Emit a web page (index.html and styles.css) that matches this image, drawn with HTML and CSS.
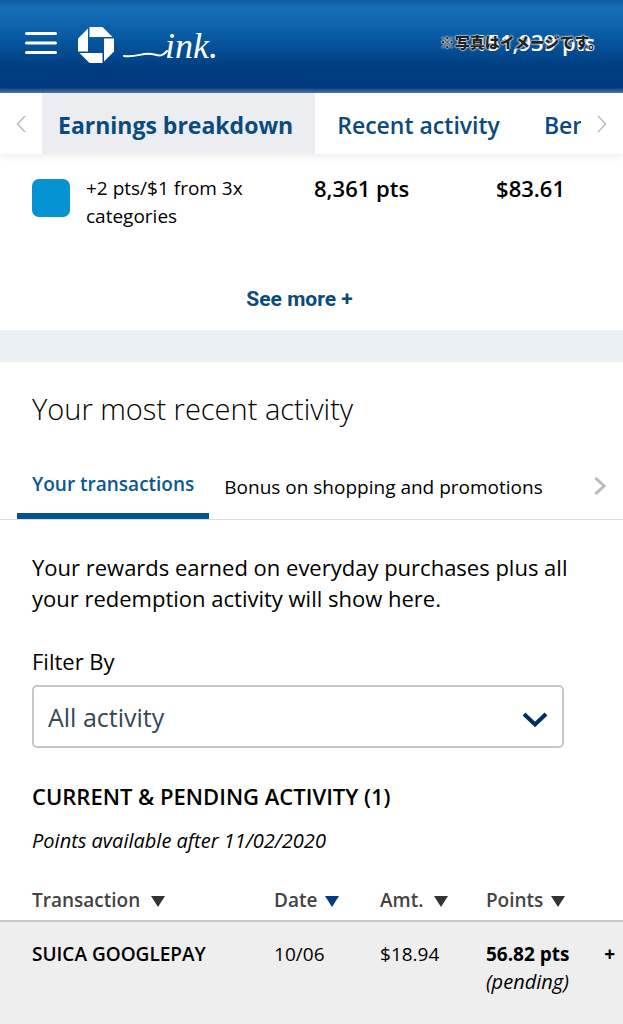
FILE: index.html
```
<!DOCTYPE html>
<html lang="en">
<head>
    <meta charset="UTF-8">
    <meta name="viewport" content="width=device-width, initial-scale=1.0">
    <title>Chase Ink - Rewards activity</title>
    <link rel="stylesheet" href="styles.css">
</head>
<body>
    <header class="header">
        <button class="menu-button" aria-label="Menu">
            <svg width="32" height="24" viewBox="0 0 32 24" stroke="#fff" stroke-width="3" stroke-linecap="round">
                <path d="M1.5 2.5H30.5M1.5 12H30.5M1.5 21.5H30.5"/>
            </svg>
        </button>
        <svg class="logo" width="36" height="36" viewBox="0 0 36 36" fill="#fff">
            <path d="M11.5 0H24.5L34.5 10H11.5Z"/>
            <path d="M36 11.5V24.5L26 34.5V11.5Z"/>
            <path d="M24.5 36H11.5L1.5 26H24.5Z"/>
            <path d="M0 24.5V11.5L10 1.5V24.5Z"/>
        </svg>
        <svg class="brand" width="100" height="42" viewBox="0 0 100 42">
            <path d="M1 34C13 36 20 30 29 32C35 33 38 36 44 29" fill="none" stroke="#fff" stroke-width="2" stroke-linecap="round"/>
            <text x="42" y="36">ink.</text>
        </svg>
        <div class="balance">
            <span class="points">151,939 pts</span>
            <span class="notice" lang="ja">※写真はイメージです。</span>
        </div>
    </header>

    <nav class="tabs">
        <button class="tab-arrow" aria-label="Previous">
            <svg width="10" height="18" viewBox="0 0 10 18" fill="none" stroke="#bbb" stroke-width="1.5"><path d="M9 1L1.5 9L9 17"/></svg>
        </button>
        <div class="tab-list">
            <a href="#" class="tab active">Earnings breakdown</a>
            <a href="#" class="tab">Recent activity</a>
            <a href="#" class="tab">Benefits</a>
        </div>
        <button class="tab-arrow" aria-label="Next">
            <svg width="10" height="18" viewBox="0 0 10 18" fill="none" stroke="#bbb" stroke-width="1.5"><path d="M1 1L8.5 9L1 17"/></svg>
        </button>
    </nav>

    <section class="earnings">
        <div class="earning">
            <span class="swatch"></span>
            <span class="category">+2 pts/$1 from 3x categories</span>
            <span class="earned">8,361 pts</span>
            <span class="earned">$83.61</span>
        </div>
        <button class="see-more">See more +</button>
    </section>

    <main class="activity">
        <h2>Your most recent activity</h2>
        <div class="subtabs">
            <a href="#" class="subtab active">Your transactions</a>
            <a href="#" class="subtab">Bonus on shopping and promotions</a>
            <button class="subtab-arrow" aria-label="Next">
                <svg width="12" height="18" viewBox="0 0 12 18" fill="none" stroke="#bbb" stroke-width="3"><path d="M1.5 1L10 9L1.5 17"/></svg>
            </button>
        </div>
        <p class="intro">Your rewards earned on everyday purchases plus all your redemption activity will show here.</p>
        <div class="filter">
            <label for="filter">Filter By</label>
            <div class="select-wrapper">
                <select id="filter">
                    <option>All activity</option>
                </select>
                <svg class="chevron" width="26" height="16" viewBox="0 0 26 16" fill="none" stroke="#002f5f" stroke-width="4"><path d="M2 2L13 12.5L24 2"/></svg>
            </div>
        </div>
        <h3>CURRENT &amp; PENDING ACTIVITY (1)</h3>
        <p class="available">Points available after 11/02/2020</p>
        <table class="transactions">
            <colgroup>
                <col class="col-name"><col class="col-date"><col class="col-amount"><col class="col-points"><col>
            </colgroup>
            <thead>
                <tr>
                    <th class="name">Transaction <span class="sort wide"></span></th>
                    <th>Date <span class="sort sorted"></span></th>
                    <th>Amt. <span class="sort wide"></span></th>
                    <th>Points <span class="sort"></span></th>
                    <th></th>
                </tr>
            </thead>
            <tbody>
                <tr>
                    <td class="name merchant">SUICA GOOGLEPAY</td>
                    <td>10/06</td>
                    <td>$18.94</td>
                    <td><b>56.82 pts</b><br><i>(pending)</i></td>
                    <td class="toggle"><button class="expand" aria-label="Show details">+</button></td>
                </tr>
            </tbody>
        </table>
    </main>
</body>
</html>
```
FILE: styles.css
```
* {
    margin: 0;
    padding: 0;
    box-sizing: border-box;
}

body {
    font-family: 'Open Sans', 'Noto Sans', sans-serif;
    font-size: 19px;
    line-height: 28px;
    color: #000;
    background: #fff;
    min-height: 100vh;
    display: flex;
    flex-direction: column;
}

button {
    background: none;
    border: none;
    font-family: inherit;
    cursor: pointer;
}

a {
    text-decoration: none;
    color: inherit;
}

svg {
    display: block;
    flex-shrink: 0;
}

.header {
    height: 93px;
    padding: 0 28px 8px 25px;
    display: flex;
    align-items: center;
    background: linear-gradient(#0c5a9c, #1870b9 8%, #075aa2 40%, #003b7e 75%, #003b7e 94%, #5577a5);
}

.logo {
    margin: 4px 0 0 21px;
}

.brand {
    margin-left: 9px;
    overflow: visible;
}

.brand text {
    font-family: 'Liberation Serif', serif;
    font-style: italic;
    font-size: 36px;
    fill: #fff;
}

.balance {
    position: relative;
    margin-left: auto;
    white-space: nowrap;
}

.points {
    font-size: 22px;
    font-weight: 600;
    color: #fff;
}

/* the notice is stamped over the balance */
.notice {
    position: absolute;
    right: -8px;
    top: 0;
    font-family: 'Noto Sans CJK JP', sans-serif;
    font-size: 15px;
    font-weight: 900;
    color: #222;
    text-shadow: 0 0 1px #fff, 0 0 2px #fff, 0 0 2px #ddd;
}

.tabs {
    display: flex;
    height: 61px;
    background: #fff;
    box-shadow: 0 2px 8px rgba(0, 0, 40, 0.08);
}

.tab-arrow {
    width: 42px;
    flex-shrink: 0;
    display: flex;
    align-items: center;
    justify-content: center;
}

.tab-list {
    flex: 1;
    display: flex;
    overflow: hidden;
}

.tab {
    padding: 0 22px;
    font-size: 23px;
    font-weight: 600;
    line-height: 64px;
    color: #0a4a7c;
    white-space: nowrap;
}

.tab.active {
    padding: 0 22px 0 16px;
    font-weight: bold;
    background: #ebedf1;
}

.earnings {
    padding: 20px 32px 17px;
    border-bottom: 32px solid #eaf0f3;
    text-align: center;
}

.earning {
    display: grid;
    grid-template-columns: 38px 212px 1fr auto;
    column-gap: 16px;
    min-height: 106px;
    padding-right: 26px;
    text-align: left;
}

.swatch {
    height: 38px;
    margin-top: 5px;
    border-radius: 7px;
    background: #0492d2;
}

.category {
    padding-right: 40px;
}

.earned {
    font-size: 22px;
    font-weight: 600;
}

.see-more {
    margin: 5px 24px 0 0;
    font-family: Roboto, sans-serif;
    font-size: 21px;
    font-weight: bold;
    line-height: 28px;
    color: #0a4a7c;
}

.activity {
    flex: 1;
    display: flex;
    flex-direction: column;
}

h2 {
    padding: 27px 32px 0;
    font-size: 29px;
    font-weight: 300;
    line-height: 40px;
}

.subtabs {
    display: flex;
    height: 91px;
    padding: 0 17px;
    border-bottom: 1px solid #ddd;
}

.subtab {
    padding: 44px 15px 0;
    white-space: nowrap;
}

.subtab.active {
    padding-top: 41px;
    font-weight: 600;
    color: #0b5891;
    border-bottom: 6px solid #06528a;
}

.subtab-arrow {
    margin-left: auto;
    padding-top: 24px;
}

.intro {
    padding: 32px 32px 0;
    font-size: 22px;
    line-height: 31px;
}

.filter {
    padding: 32px 59px 0 32px;
}

.filter label {
    display: block;
    font-size: 22px;
    line-height: 31px;
}

.select-wrapper {
    position: relative;
    margin-top: 8px;
}

.filter select {
    display: block;
    width: 100%;
    height: 63px;
    padding: 0 14px;
    appearance: none;
    border: 2px solid #c4c6c8;
    border-radius: 5px;
    background: #fff;
    font-family: inherit;
    font-size: 25px;
    color: #33475b;
}

.chevron {
    position: absolute;
    right: 16px;
    top: 27px;
    pointer-events: none;
}

h3 {
    padding: 34px 32px 0;
    font-size: 22px;
    font-weight: 600;
    line-height: 28px;
}

.available {
    padding: 17px 32px 0;
    font-size: 20px;
    font-style: italic;
}

.transactions {
    width: 100%;
    flex: 1;
    margin-top: 19px;
    table-layout: fixed;
    border-collapse: collapse;
}

.col-name {
    width: 44%;
}

.col-date {
    width: 17%;
}

.col-amount {
    width: 17%;
}

.col-points {
    width: 18%;
}

.transactions th {
    padding: 12px 0 6px;
    text-align: left;
    font-weight: 600;
    color: #444;
    white-space: nowrap;
}

.transactions .name {
    padding-left: 32px;
}

.transactions tbody tr {
    background: #eee;
    border-top: 2px solid #c8c8c8;
}

.transactions td {
    padding: 19px 0 28px;
    vertical-align: top;
    line-height: 27px;
}

.transactions .toggle {
    padding-right: 8px;
    text-align: right;
}

.transactions i {
    font-size: 20px;
}

.merchant {
    font-weight: 600;
}

.sort {
    display: inline-block;
    margin-left: 3px;
    border: 7px solid transparent;
    border-top: 11px solid #333;
    border-bottom: 0;
}

.sort.wide {
    margin-left: 6px;
}

.sort.sorted {
    border-top-color: #003b7e;
}

.expand {
    font-size: 19px;
    font-weight: bold;
    line-height: 27px;
}
```
